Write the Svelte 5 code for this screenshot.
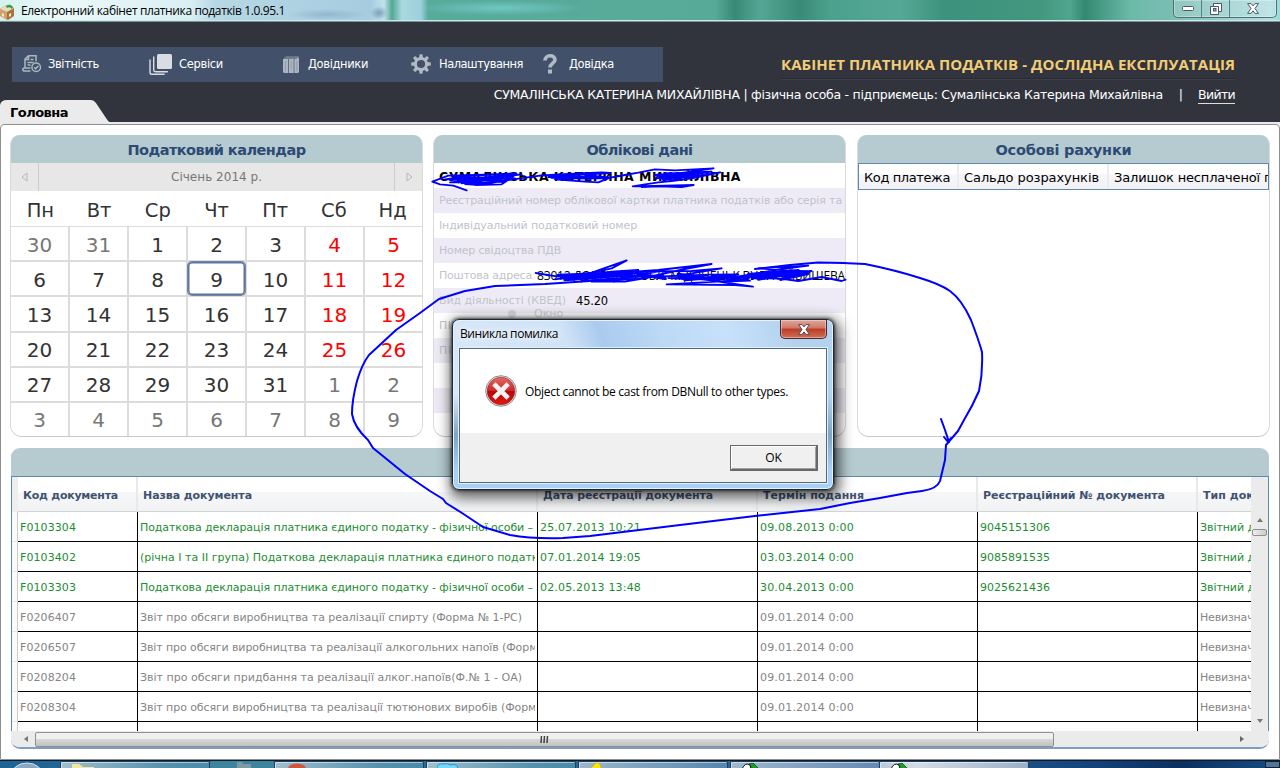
<script>
  // Spreads the letters of a label so that it takes exactly the given width.
  function fit(node, width) {
    const natural = node.getBoundingClientRect().width;
    const count = [...node.textContent].length;
    node.style.letterSpacing = `${(width - natural) / count}px`;
  }

  const menu = [
    { icon: 'report', label: 'Звітність', width: 51, gap: 3 },
    { icon: 'layers', label: 'Сервіси', width: 44, gap: 6 },
    { icon: 'books', label: 'Довідники', width: 60, gap: 4 },
    { icon: 'gear', label: 'Налаштування', width: 84, gap: 5 },
    { icon: 'help', label: 'Довідка', width: 45, gap: 8 }
  ];

  const weekdays = ['Пн', 'Вт', 'Ср', 'Чт', 'Пт', 'Сб', 'Нд'];
  const days = Array.from({ length: 42 }, (_, i) => {
    const n = i - 1;
    const outside = n < 1 || n > 31;
    return {
      label: n < 1 ? n + 31 : n > 31 ? n - 31 : n,
      outside,
      weekend: !outside && i % 7 > 4,
      today: n === 9
    };
  });

  const info = [
    { label: 'Реєстраційний номер облікової картки платника податків або серія та', width: 403 },
    { label: 'Індивідуальний податковий номер', width: 198 },
    { label: 'Номер свідоцтва ПДВ', width: 122 },
    { label: 'Поштова адреса', width: 93, value: '83012 ДОНЕЦЬКА ОБЛ. М.ДОНЕЦЬК ВУЛ. КУЙБИШЕВА', valueWidth: 308, gap: 5 },
    { label: 'Вид діяльності (КВЕД)', width: 127, value: '45.20', valueWidth: 32, gap: 10 },
    { label: 'ПІБ директора', width: 90 },
    { label: 'ПІБ бухгалтера', width: 98 },
    { label: '' }, { label: '' }, { label: '' }
  ];

  const columns = [
    { label: 'Код документа', width: 95 },
    { label: 'Назва документа', width: 109 },
    { label: 'Дата реєстрації документа', width: 170 },
    { label: 'Термін подання', width: 101 },
    { label: 'Реєстраційний № документа', width: 182 },
    { label: 'Тип документа', width: 96 }
  ];
  const rows = [
    ['F0103304', 'Податкова декларація платника єдиного податку - фізичної особи –', 393, '25.07.2013 10:21', '09.08.2013 0:00', '9045151306'],
    ['F0103402', '(річна І та ІІ група) Податкова декларація платника єдиного податку', 405, '07.01.2014 19:05', '03.03.2014 0:00', '9085891535'],
    ['F0103303', 'Податкова декларація платника єдиного податку - фізичної особи –', 393, '02.05.2013 13:48', '30.04.2013 0:00', '9025621436'],
    ['F0206407', 'Звіт про обсяги виробництва та реалізації спирту (Форма № 1-РС)', 382, '', '09.01.2014 0:00', ''],
    ['F0206507', 'Звіт про обсяги виробництва та реалізації алкогольних напоїв (Форма', 404, '', '09.01.2014 0:00', ''],
    ['F0208204', 'Звіт про обсяги придбання та реалізації алког.напоїв(Ф.№ 1 - ОА)', 382, '', '09.01.2014 0:00', ''],
    ['F0208304', 'Звіт про обсяги виробництва та реалізації тютюнових виробів (Форма', 403, '', '09.01.2014 0:00', '']
  ];
</script>

<div class="screen">
  <header class="titlebar">
    <div class="caption">
      <svg width="16" height="18" viewBox="0 0 16 18">
        <path d="M0 7l6-4 8 3v8l-6 4-7-4z" fill="#a9733f" />
        <path d="M0 7l7 3v8l-7-4z" fill="#cfa36b" />
        <path d="M0 7l6-4 8 3-7 4z" fill="#e9d9bd" />
        <path d="M6 4q4-3 7 1l-1 2q-2-3-5-1z" fill="#29a33a" />
        <path d="M2 11l2 1v3l-2-1zM9 12l2-1v3l-2 1z" fill="#f5ead6" />
      </svg>
      <span class="ui" use:fit={264}>Електронний кабінет платника податків 1.0.95.1</span>
    </div>
    <div class="winbtns">
      <span><svg width="12" height="5"><rect x=".5" y=".5" width="11" height="4" rx="1" fill="#fff" stroke="#4b5766" /></svg></span>
      <span><svg width="12" height="12" fill="#fff" stroke="#4b5766"><path d="M3.500 .5h8v8h-3v3h-8v-8h3z" /><path d="M3.500 3.500h5v5" fill="none" /><rect x="3.500" y="5.500" width="2.500" height="2.500" fill="#7fb0ad" /></svg></span>
      <span class="wide"><svg width="12" height="11" viewBox="0 0 12 11"><path d="M.6 .6h3.400l2 2.300 2-2.300h3.400l-3.400 4.900 3.400 4.900h-3.400l-2-2.500-2 2.500h-3.400l3.400-4.900z" fill="#fff" stroke="#4b5766" /></svg></span>
    </div>
  </header>

  <div class="banner">
    <nav>
      {#each menu as item}
        <div class="item" style:gap="{item.gap}px">
          <span class="mi {item.icon}">
            {#if item.icon === 'report'}
              <svg width="20" height="18" viewBox="0 0 20 18" fill="none" stroke="#adb5c3" stroke-width="1.500">
                <path d="M8.500 16h-6q-1.700 0-1.700-1.500t1.700-1.500h6M3 13v-9l3.500-3.200h7.500v5.500M3 4.500h3.500v-3.500M8.500 4.500h3M5.500 7.500h6M5.500 10h3" />
                <circle cx="14.200" cy="12.200" r="4.300" /><path d="M12.200 12.200l1.500 1.600 2.700-3" />
              </svg>
            {:else if item.icon === 'layers'}
              <svg width="23" height="21" viewBox="0 0 23 21">
                <rect x="8" y="0" width="15" height="15" rx="1.500" fill="#d9dde3" />
                <path d="M4.700 2.500v13.500q0 1.700 1.700 1.700h12.500M1 5.500v13q0 1.800 1.700 1.800h13" fill="none" stroke="#d9dde3" stroke-width="1.400" />
              </svg>
            {:else if item.icon === 'books'}
              <svg width="17" height="17" viewBox="0 0 17 17">
                <path d="M1 2l2-1.500h13l-1 2.500h-14z" fill="#8995a8" />
                <path d="M0 3h5v14h-4l-1-1zM5.700 3h5v14h-5zM11.300 3l4.700-1v14l-1 1h-3.700z" fill="#adb5c3" />
                <path d="M1 2h13M2 .8l2 2M6 .8l2 2M10 .8l2 2" stroke="#56657d" stroke-width=".8" />
                <path d="M2.500 5v10M8.200 5v8M13.800 5v10" stroke="#8995a8" stroke-width=".8" />
              </svg>
            {:else if item.icon === 'gear'}
              <svg width="20" height="20" viewBox="-10 -10 20 20" fill="#b3bac6">
                {#each [0, 45, 90, 135, 180, 225, 270, 315] as a}
                  <path d="M-1.900-6h3.800l-.5-3.800h-2.800z" transform="rotate({a})" />
                {/each}
                <circle r="5.600" fill="none" stroke="#b3bac6" stroke-width="3" />
              </svg>
            {:else}
              <svg width="14" height="20" viewBox="0 0 14 20"><path d="M2 6.500c0-6 10-6.200 10-.8 0 3.700-5 3.700-5 7.800" fill="none" stroke="#b3bac6" stroke-width="3.600" /><rect x="5" y="15.500" width="4" height="4" fill="#b3bac6" /></svg>
            {/if}
          </span>
          <span class="ml" use:fit={item.width}>{item.label}</span>
        </div>
      {/each}
    </nav>
    <div class="account">
      <div class="product"><span class="ui" use:fit={454}>КАБІНЕТ ПЛАТНИКА ПОДАТКІВ - ДОСЛІДНА ЕКСПЛУАТАЦІЯ</span></div>
      <div class="user">
        <span use:fit={669}>СУМАЛІНСЬКА КАТЕРИНА МИХАЙЛІВНА | фізична особа - підприємець: Сумалінська Катерина Михайлівна</span>
        <span class="bar">|</span>
        <span class="exit" use:fit={37}>Вийти</span>
      </div>
    </div>
    <div class="tab">
      <svg width="112" height="23" viewBox="0 0 112 23"><path d="M0 23v-18q1-5 7-5h84q3 0 5 3l10 15q2 4 5 5z" fill="#ebebeb" /></svg>
      <span use:fit={58}>Головна</span>
    </div>
  </div>

  <main>
    <div class="top">
      <section class="panel">
        <h2><span use:fit={178}>Податковий календар</span></h2>
        <div class="month">
          <i><svg width="7" height="10"><path d="M6 1v8L1 5z" fill="none" stroke="#b5b8b8" /></svg></i>
          <b><span use:fit={91}>Січень 2014 р.</span></b>
          <i><svg width="7" height="10"><path d="M1 1v8l5-4z" fill="none" stroke="#b5b8b8" /></svg></i>
        </div>
        <div class="week">{#each weekdays as d}<span>{d}</span>{/each}</div>
        <div class="days">
          {#each days as d}
            <span class:outside={d.outside} class:weekend={d.weekend} class:today={d.today}>{d.label}</span>
          {/each}
        </div>
      </section>

      <section class="panel details">
        <h2><span use:fit={106}>Облікові дані</span></h2>
        <div class="name"><span use:fit={302}>СУМАЛІНСЬКА КАТЕРИНА МИХАЙЛІВНА</span></div>
        {#each info as row}
          <div class="info">
            <span class="key" use:fit={row.width ?? 0}>{row.label}</span>
            {#if row.value}<span class="val" class:narrow={row.valueWidth > 100} style:margin-left="{row.gap}px" use:fit={row.valueWidth}>{row.value}</span>{/if}
          </div>
        {/each}
      </section>

      <section class="panel">
        <h2><span use:fit={136}>Особові рахунки</span></h2>
        <div class="acc">
          <span class="c1"><em use:fit={86}>Код платежа</em></span>
          <span class="c2"><em use:fit={135}>Сальдо розрахунків</em></span>
          <span class="c3"><em use:fit={178}>Залишок несплаченої пені</em></span>
        </div>
      </section>
    </div>

    <section class="panel docs">
      <h2></h2>
      <div class="grid">
        <div class="view">
          <div class="line head">
            <span class="sel"></span>
            {#each columns as c}<span><em use:fit={c.width}>{c.label}</em></span>{/each}
          </div>
          {#each rows as r, i}
            <div class="line" class:done={i < 3}>
              <span class="sel"></span>
              <span><em use:fit={56}>{r[0]}</em></span>
              <span><em use:fit={r[2]}>{r[1]}</em></span>
              <span>{#if r[3]}<em use:fit={101}>{r[3]}</em>{/if}</span>
              <span><em use:fit={94}>{r[4]}</em></span>
              <span>{#if r[5]}<em use:fit={70}>{r[5]}</em>{/if}</span>
              <span>{#if i < 3}<em use:fit={103}>Звітний документ</em>{:else}<em use:fit={81}>Невизначений</em>{/if}</span>
            </div>
          {/each}
          <div class="line">{#each [0, 1, 2, 3, 4, 5, 6] as n}<span class:sel={n === 0}></span>{/each}</div>
        </div>
        <div class="vscroll">
          <div class="vhead"></div>
          <svg width="6" height="4"><path d="M0 4l3-4 3 4z" fill="#777" /></svg>
          <div class="vthumb"></div>
          <svg class="down" width="6" height="4"><path d="M0 0l3 4 3-4z" fill="#777" /></svg>
        </div>
      </div>
      <div class="hscroll">
        <svg width="4" height="6"><path d="M4 0L0 3l4 3z" fill="#777" /></svg>
        <div class="hthumb"><svg width="9" height="7"><path d="M1.500 0L1 7M4.500 0L4 7M7.500 0L7 7" stroke="#444" stroke-width="1.500" /></svg></div>
        <svg class="right" width="4" height="6"><path d="M0 0l4 3-4 3z" fill="#666" /></svg>
      </div>
    </section>
  </main>

  <footer>
    <div class="orb"><svg width="32" height="8"><ellipse cx="16" cy="15" rx="16" ry="13" fill="#8ba9bf" stroke="#d5e3ec" /></svg></div>
    <div class="task"><svg width="24" height="6"><path d="M1 1h7l4 3h11v2h-22z" fill="#f4e6a0" /></svg></div>
    <div class="task dim"><svg width="20" height="6"><path d="M3 0h5l1 2h8v4h-14z" fill="#7f9aa5" /></svg></div>
    <div class="task"><svg width="24" height="6"><ellipse cx="12" cy="6" rx="9" ry="5.500" fill="#d2553f" /></svg></div>
    <div class="task b"><svg width="24" height="6"><path d="M0 6q0-6 6-5q5-1 8 1q6-2 7 4" fill="#7bd5f5" stroke="#08a2df" /></svg></div>
    <div class="task c"><svg width="24" height="6"><path d="M1 6l6-6q5-1 5 6z" fill="#ffe600" stroke="#c9a300" stroke-width=".5" /></svg></div>
    <div class="task d"><svg width="24" height="6"><path d="M1 6q3-7 8-4l1 4z" fill="#fff" stroke="#111" /><path d="M8 1l4-1 6 6h-6z" fill="#12a51d" stroke="#111" stroke-width=".6" /></svg></div>
    <div class="task e"><svg width="24" height="6"><path d="M1 6q3-7 8-4l1 4z" fill="#fff" stroke="#111" /><path d="M8 1l4-1 6 6h-6z" fill="#12a51d" stroke="#111" stroke-width=".6" /></svg></div>
    <div class="desk"></div>
  </footer>

  <div class="ghost"><i></i><span>Окно</span></div>

  <div class="dialog">
    <div class="dhead">
      <span class="ui" use:fit={98}>Виникла помилка</span>
      <div class="close"><svg width="12" height="11" viewBox="0 0 12 11"><path d="M.6 .6h3.400l2 2.300 2-2.300h3.400l-3.400 4.900 3.400 4.900h-3.400l-2-2.500-2 2.500h-3.400l3.400-4.900z" fill="#fff" stroke="#5a4a50" /></svg></div>
    </div>
    <div class="dbody">
      <div class="msg">
        <svg width="32" height="32" viewBox="0 0 32 32">
          <defs><linearGradient id="red" x1="0" y1="0" x2="0" y2="1"><stop offset="0" stop-color="#e46a66" /><stop offset=".48" stop-color="#d02a28" /><stop offset=".52" stop-color="#b50808" /><stop offset="1" stop-color="#e01a12" /></linearGradient></defs>
          <circle cx="16" cy="16" r="15.300" fill="#ededed" stroke="#8b8b8b" />
          <circle cx="16" cy="16" r="13.800" fill="url(#red)" stroke="#8f2020" stroke-width=".6" />
          <path d="M10.500 10.500l11 11M21.500 10.500l-11 11" stroke="#f3f3f3" stroke-width="4.600" stroke-linecap="square" />
        </svg>
        <span class="ui" use:fit={263}>Object cannot be cast from DBNull to other types.</span>
      </div>
      <div class="actions"><div class="ok ui">OK</div></div>
    </div>
  </div>

  <svg class="ink" width="1280" height="768" fill="none" stroke="#0000ff" stroke-width="2" stroke-linejoin="round" stroke-linecap="round">
    <path d="M755 269L790 265 818 262.500 843 263 865 264 Q895 270 920 278 Q940 284 950 291 Q962 300 971 320 Q979 341 982 352 Q983 372 979 391 Q973 405 964 420 L958 431 946 445 945 460 940 481 Q937 489 922 491 L907 493 880 498 850 503 820 509 755 516 680 525 590 536 563 538 Q533 539 510 535 L483 527 462 513 446 503 443 499 430 491 405 474 373 448 368 440 Q354 427 352 414 Q352 400 357 381 Q362 364 369 355 L396 330 420 313 439 299 465 291 495 286 545 284 590 281" />
    <path d="M941 419l4 11 4 12M944 437l4 5 3-4" />
    <g transform="translate(425 125) scale(.33333)" stroke-width="5.500">
      <path d="M125 196L85 182 45 178 22 170 70 152 155 150 270 145 130 153 60 163 180 157 290 148 150 165 75 172 190 172 270 160 165 180 120 177 245 168 230 178 150 180M75 165l190-11M110 175l130-19M245 166l100-14 M555 158L600 150 640 143 690 133 750 136 866 130 760 145 690 150 790 142 860 140 760 155 690 160 820 152 886 142 800 160 740 168 700 172 660 178 623 184 720 182 806 180 770 186 700 184 650 186" />
      <path d="M345 152L400 148 530 142 555 144 420 152 370 156 500 155 545 160 430 160 390 163 480 170 520 172 555 158 480 150" />
      <path d="M332 444L400 455 500 443 605 406 560 430 450 455 390 463 560 440 640 435 500 455 440 464 600 447 700 440 580 460 470 468 640 455 715 450 600 470 500 470 650 460 780 432 860 417 700 435 630 440 800 438 890 430 760 452 700 455 850 449 940 448 800 463 730 459 880 460 960 465 820 473 725 478 930 480 984 485 850 465 760 455 900 470 975 467 920 458 1070 432 1150 422 1000 430 1090 437 1150 440 960 454 1110 440 1160 438 1070 461 980 460 1130 448 1066 465 1150 447 1065 461 1120 468 1190 456 1250 468 1262 464" />
      <path d="M400 451l220-8M410 458l200-8M420 464l200-15M640 448l80 12M970 449l150-12M980 456l130-14M1000 462l120-20M760 448l120 16M780 464l120-9M870 455l100 2" stroke-width="10" />
      <path d="M90 156l140 12M100 170l150-18M100 163l160-6M380 156l120 2M700 152l110 2M715 163l95-12M720 147l90 2" stroke-width="10" />
    </g>
  </svg>
</div>

<style>
  :global(body) { overflow: hidden; }
  .screen { position: relative; width: 1280px; height: 768px; overflow: hidden; background: #fff; display: flex; flex-direction: column; font-family: 'DejaVu Sans', sans-serif; color: #000; }
  .screen span, .screen em { white-space: nowrap; font-style: normal; }
  .screen svg { display: block; }
  .caption span, .ml, .product span, .user span, .tab span, h2 span, .month b span, .name span, .key, .val, em, .dhead span, .msg span { display: inline-block; flex: none; }
  .ui { font-family: 'Open Sans', sans-serif; }

  .titlebar { height: 22px; box-sizing: border-box; border-bottom: 1px solid #7c9298; box-shadow: inset 0 -1px #c8eaea; flex: none; display: flex; justify-content: space-between;
    background:
      radial-gradient(ellipse at center, #7fa6bf90 0, #7fa6bf00 75%) 290px 9px / 75px 11px no-repeat,
      radial-gradient(ellipse at center, #7e9fb8 0, #7e9fb800 70%) 370px 6px / 18px 14px no-repeat,
      radial-gradient(ellipse at center, #70c7c3 0, #70c7c300 75%) 420px 1px / 160px 14px no-repeat,
      linear-gradient(to right, #d6f2ee 0, #ebf8f8 60px, #d9eff4 190px, #b6d8e5 215px, #a7cce0 370px, #c1e2ea 384px, #55a894 392px, #a8d9de 402px, #9cd0dc 421px, #57ab9b 428px, #58aa98 715px, #388975 735px, #55a795 760px, #398a77 800px, #4ba18d 830px, #55a896 900px, #3c927d 945px, #43977f 1040px, #4fa58e 1070px, #338970 1085px, #6bb9a8 1130px, #7ebfb6 1180px, #b4dfe2 1270px, #9bdadb); }
  .caption { display: flex; gap: 5px; align-items: flex-start; padding-top: 2px; font-size: 12px; line-height: 18px; }
  .winbtns { display: flex; height: 17px; margin-right: 3px; border: 1px solid #506f73; border-top: 0; border-radius: 0 0 5px 5px; background: #ffffff28; box-shadow: inset 0 0 0 1px #ffffff50; }
  .winbtns span { width: 27px; display: flex; align-items: center; justify-content: center; border-right: 1px solid #5b8384; }
  .winbtns .wide { width: 46px; border: 0; }

  .banner { height: 102px; flex: none; background: #31343d; display: grid; grid-template-columns: 663px 1fr; position: relative; border-bottom: 2px solid #ebe9ed; box-sizing: border-box; }
  nav { grid-column: 1; grid-row: 1; margin: 25px 0 0 12px; height: 35px; background: #425169; display: grid; grid-template-columns: 128px 131px 130px 131px 1fr; padding-left: 7px; }
  .item { display: flex; align-items: center; color: #fff; font-size: 11.500px; padding-bottom: 1px; }
  .mi { width: 26px; display: flex; justify-content: center; flex: none; }
  .help { width: 22px; }
  .account { grid-column: 1 / 3; grid-row: 1; display: flex; flex-direction: column; align-items: flex-end; padding: 32px 45px 0 0; }
  .product { color: #f2cd75; font-size: 15px; font-weight: 700; line-height: 21px; border-bottom: 1px solid #292c35; height: 24px; box-shadow: 0 1px #3c3f48; }
  .user { display: flex; color: #fff; font-size: 12.500px; margin-top: 6px; line-height: 19px; }
  .bar { margin: 0 15px 0 16px; }
  .exit { border-bottom: 1px solid #dedede; height: 18px; }
  .tab { position: absolute; left: 0; bottom: -1px; display: grid; align-items: center; }
  .tab svg, .tab span { grid-area: 1 / 1; }
  .tab span { margin-left: 10px; justify-self: start; font-weight: 700; font-size: 13px; padding-top: 2px; }

  main { height: 636px; flex: none; border: 1px solid #8e8e8e; border-radius: 4px 4px 0 0; padding: 10px 9px 0 10px; display: flex; flex-direction: column; gap: 11px; background: #fff; box-sizing: border-box; }
  .top { display: grid; grid-template-columns: 413px 413px 413px; gap: 10px; height: 302px; margin-left: -1px; }
  .panel { border: 1px solid #dadada; border-bottom-color: #c8c8c8; border-radius: 9px 9px 12px 12px; overflow: hidden; display: flex; flex-direction: column; border-top: 0; box-sizing: border-box; }
  .panel:nth-child(3) { margin: 0 -1px 0 1px; }
  h2 { margin: 0 -1px; height: 28px; flex: none; background: #b5cbd0; color: #2d4a75; font-size: 14.500px; font-weight: 700; line-height: 30px; text-align: center; }
  .month { height: 28px; flex: none; background: #e6e7e6; display: flex; margin: 0 -1px; color: #777; font-size: 12px; }
  .month i { width: 28px; display: flex; align-items: center; justify-content: center; }
  .month b { flex: 1; border: 1px solid #ccc; border-width: 0 1px; font-weight: 400; text-align: center; line-height: 29px; }
  .week { display: grid; grid-template-columns: repeat(7, 1fr); height: 35px; flex: none; text-align: center; line-height: 39px; font-size: 19.500px; color: #333; }
  .days { flex: 1; display: grid; grid-template-columns: repeat(7, 1fr); grid-template-rows: repeat(6, 1fr); gap: 2px; background: #dcdcdc; padding-top: 1px; min-height: 0; }
  .days span { background: #fff; display: flex; align-items: center; justify-content: center; font-size: 20px; color: #333; padding-top: 2px; }
  .days .outside { color: #777; }
  .days .weekend { color: #f00; }
  .days .today { box-shadow: 0 0 0 1px #7386a6, inset 0 0 0 1.500px #60759c; border-radius: 4px; }

  .name { height: 25px; flex: none; padding: 0 5px; line-height: 27px; font-size: 12.500px; font-weight: 700; }
  .info { height: 25px; flex: none; padding-left: 5px; display: flex; align-items: center; font-size: 11px; overflow: hidden; }
  .info:nth-child(odd) { background: #eeebf6; }
  .key { color: #bfc3ca; }
  .val { font-size: 11.500px; }
  .narrow { font-family: 'Open Sans', sans-serif; font-size: 12px; }
  .acc { height: 27px; box-sizing: border-box; flex: none; border: 1px solid #5d88b4; display: flex; font-size: 13px; line-height: 27px; background: linear-gradient(#fff 40%, #f6f6f8 42%, #f2f2f4); overflow: hidden; }
  .acc span { padding-left: 5px; box-sizing: border-box; flex: none; border-right: 2px solid #ececee; }
  .c1 { width: 100px; }
  .c2 { width: 150px; }
  .c3 { width: 240px; }

  .docs { height: 301px; border: 0; background: #efefef; width: 1258px; border-radius: 9px; border-bottom: 2px solid #7f9fc0; }
  .docs h2 { margin: 0; border-bottom: 1px solid #5d88b4; }
  .grid { height: 254px; flex: none; display: flex; border: 1px solid #5d88b4; border-width: 0 1px; }
  .view { width: 1239px; height: 254px; overflow: hidden; background: #fff; flex: none; }
  .line { display: grid; grid-template-columns: 6px 120px 400px 220px 220px 220px 220px; height: 30px; font-size: 11px; color: #858585; line-height: 32px; }
  .line span { border: 1px solid #000; border-width: 0 1px 1px 0; padding: 0 2px; overflow: clip; overflow-clip-margin: content-box; height: 30px; box-sizing: border-box; min-width: 0; }
  .line .sel { border-color: #ccc; border-bottom-color: #e6e6e6; background: #fafafa; padding: 0; }
  .done { color: #1b8d31; }
  .head, .line.head span { height: 35px; }
  .head { font-weight: 700; color: #3f526f; line-height: 37px; background: linear-gradient(#fff 42%, #f6f7f9 43%, #f1f2f4); }
  .line.head span { border-color: #d3d3d3; border-right: 2px solid #e8e9eb; padding-left: 5px; }
  .line.head .sel { background: #eee; border: 0; padding: 0; }
  .vscroll { flex: 1; background: #ebebeb; display: flex; flex-direction: column; align-items: center; gap: 7px; }
  .vhead { height: 34px; }
  .vthumb { width: 13px; height: 5px; border: 1px solid #909090; border-radius: 2px; background: linear-gradient(to right, #eee, #ccc); }
  .down { margin: auto 0 8px; }
  .hscroll { flex: 1; background: #ebebeb; margin: 0 1px; display: flex; align-items: center; padding-left: 12px; }
  .hthumb { width: 1017px; height: 13px; margin-left: 7px; border: 1px solid #8f8f8f; border-radius: 2px; background: linear-gradient(#f0f0f0 45%, #d6d6d6 50%, #c2c2c2); display: flex; align-items: center; justify-content: center; }
  .right { margin-left: 186px; }

  footer { height: 8px; flex: none; display: flex; border-top: 1px solid #0b1c2f; box-sizing: border-box; background: linear-gradient(to right, #1d6396, #2d6c8c 350px, #2e6597 850px, #15457e 1080px, #0c2f5f 1180px, #174d83); }
  .orb { width: 60px; padding-left: 11px; box-sizing: border-box; overflow: hidden; }
  .task { width: 150px; box-sizing: border-box; border: 1px solid #213f58; border-bottom: 0; padding: 1px 0 0 10px; box-shadow: inset 1px 1px #ffffff80; background: linear-gradient(to right, #a0bfcc, #5591ac 70%, #4b8bab); border-radius: 2px 2px 0 0; overflow: hidden; }
  .dim { width: 64px; background: #3d859c; box-shadow: none; border: 0; padding-left: 24px; }
  .b { margin-left: 2px; }
  .c { margin-left: 2px; background: linear-gradient(to right, #9cb8cb, #5685ad); }
  .d { margin-left: 2px; background: linear-gradient(to right, #a0b9cc, #6688b3); }
  .e { background: linear-gradient(to right, #b9c9d8, #d3dce6 25%, #9cafc8); margin-left: -1px; }
  .desk { width: 13px; margin-left: auto; border: 1px solid #0b2341; background: #567592; }

  .ghost { position: absolute; left: 501px; top: 305px; width: 200px; height: 20px; opacity: .16; display: flex; align-items: center; gap: 18px; font-size: 11px; line-height: 14px; padding-bottom: 2px; box-sizing: border-box; }
  .ghost i { width: 8px; height: 8px; border-radius: 50%; background: #556; margin-left: 7px; }

  .dialog { position: absolute; left: 452px; top: 319px; width: 382px; height: 171px; box-sizing: border-box; border: 1px solid #1c2733; border-radius: 7px; padding: 0 6px 6px; display: flex; flex-direction: column; box-shadow: inset 0 0 0 1px #e4f3ff, 0 0 3px 1px #0009, 2px 4px 13px 4px #0009;
    background: linear-gradient(#0000 0 75px, #7fa5c5 115px, #a9d0f5 150px), linear-gradient(70deg, #d9e9f8 0, #cfe3f7 38%, #abcbee 46%, #bcd9f5 60%, #c8e1fa 75%, #b3d2ee 90%); }
  .dhead { height: 28px; flex: none; display: flex; justify-content: space-between; font-size: 12px; line-height: 28px; padding-left: 1px; }
  .dhead span { text-shadow: 0 0 8px #fff, 0 0 8px #fff; }
  .close { width: 45px; height: 18px; border: 1px solid #4d2630; border-top: 0; border-radius: 0 0 5px 5px; display: flex; align-items: center; justify-content: center; background: linear-gradient(#dfa59b 0, #cf7767 45%, #bb3a25 50%, #cf7054); box-shadow: inset 0 0 0 1px #ffffff60; }
  .dbody { flex: 1; border: 1px solid #56697b; display: flex; flex-direction: column; background: #f0f0f0; box-shadow: 0 0 0 1px #dff0ff; }
  .msg { height: 84px; background: #fff; display: flex; align-items: center; padding-left: 25px; gap: 8px; font-size: 12px; }
  .actions { flex: 1; display: flex; justify-content: flex-end; align-items: center; padding-right: 8px; }
  .ok { width: 88px; height: 26px; box-sizing: border-box; border: 1px solid #696969; border-right: 2px solid #696969; border-bottom: 2px solid #696969; box-shadow: inset 1px 1px #fff, inset -1px -1px #a0a0a0; font-size: 12px; line-height: 23px; text-align: center; background: #f0f0f0; }
  .ink { position: absolute; inset: 0; z-index: 3; pointer-events: none; }
</style>
